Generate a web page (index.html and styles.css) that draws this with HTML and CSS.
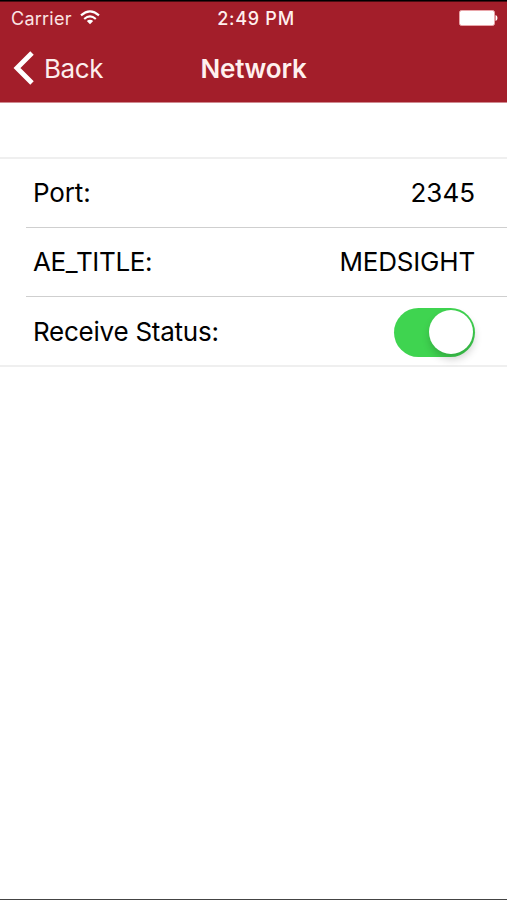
FILE: index.html
```html
<!DOCTYPE html>
<html lang="en">
<head>
<meta charset="utf-8">
<title>Network</title>
<link rel="stylesheet" href="styles.css">
</head>
<body>
<main class="screen">
  <header class="header">
    <div class="status">
      <div class="carrier"><span class="carrier-name">Carrier</span>
        <svg class="wifi" viewBox="0 0 20 15"><g fill="none" stroke="#fff" stroke-width="2.1"><path d="M1 5.4Q10-2.6 19 5.4M4.2 9Q10 3.8 15.8 9"/></g><path d="M6.8 11Q10 8.6 13.2 11L10 14.2Z" fill="#fff"/></svg>
      </div>
      <span class="time">2:49 PM</span>
      <svg class="battery" viewBox="0 0 39 16"><rect x=".5" y=".5" width="35" height="15" rx="2" fill="#fff" stroke="#e9a5a9"/><path d="M36.5 5Q38.5 5.5 38.5 8T36.5 11Z" fill="#fff"/></svg>
    </div>
    <nav class="nav">
      <div class="back"><svg class="chevron" viewBox="0 0 22 34"><path d="M19 2L4 17L19 32" fill="none" stroke="#fff" stroke-width="4.9"/></svg><span class="back-label">Back</span></div>
      <h1 class="title">Network</h1>
    </nav>
  </header>
  <section class="list">
    <div class="row"><span class="label port">Port:</span><span class="value number">2345</span></div>
    <div class="row"><span class="label ae">AE_TITLE:</span><span class="value name">MEDSIGHT</span></div>
    <div class="row"><span class="label receive">Receive Status:</span><span class="switch"><span class="knob"></span></span></div>
  </section>
</main>
</body>
</html>
```
FILE: styles.css
```css
* { box-sizing: border-box; }
body { margin: 0; background: #fff; color: #000; font-family: Inter, Roboto, sans-serif; }
.screen { height: 900px; border-top: 1px solid #000; border-bottom: 1px solid #444; overflow: hidden; }
.header { height: 102px; background: #a31e2a; color: #fff; border-top: 1px solid #4a0c12; border-bottom: 1px solid #d08a90; }
.status { height: 32px; padding: 0 9px 0 11px; display: grid; grid-template-columns: 1fr auto 1fr; align-items: center; font-size: 18px; }
.carrier { display: flex; align-items: center; gap: 8px; color: #fbe5e4; }
.carrier-name { letter-spacing: .25px; }
.wifi { width: 20px; height: 15px; margin-top: -2px; }
.time { font-weight: 500; letter-spacing: .75px; color: #fff0ee; padding-left: 3px; }
.battery { width: 39px; height: 16px; justify-self: end; }
.nav { height: 68px; padding: 0 13px; display: grid; grid-template-columns: 1fr auto 1fr; align-items: center; }
.back { display: flex; align-items: center; gap: 9px; font-size: 26px; color: #fdeeed; }
.back-label { letter-spacing: -.4px; }
.chevron { width: 22px; height: 34px; }
.title { margin: 0; font-size: 26px; font-weight: 600; letter-spacing: -.2px; color: #fff0ee; }
.list { margin-top: 54px; border-top: 2px solid #efefef; border-bottom: 2px solid #efefef; }
.row { height: 69px; margin-left: 26px; padding: 0 32px 0 7px; display: flex; align-items: center; justify-content: space-between; font-size: 26px; }
.row:first-child { height: 68px; }
.row + .row { border-top: 1px solid #cfcfcf; }
.row:last-child { padding-top: 2px; }
.label { margin-top: -1px; }
.value { margin-top: -2px; }
.port { letter-spacing: -.15px; }
.ae { letter-spacing: -.35px; }
.receive { letter-spacing: -.25px; margin-top: -1px; }
.name { letter-spacing: -.2px; }
.switch { width: 81px; height: 49px; border-radius: 25px; background: #3fd450; padding: 2.5px; display: flex; justify-content: flex-end; }
.knob { width: 44px; height: 44px; border-radius: 50%; background: #fff; box-shadow: 1px 5px 8px #0003; }
```
